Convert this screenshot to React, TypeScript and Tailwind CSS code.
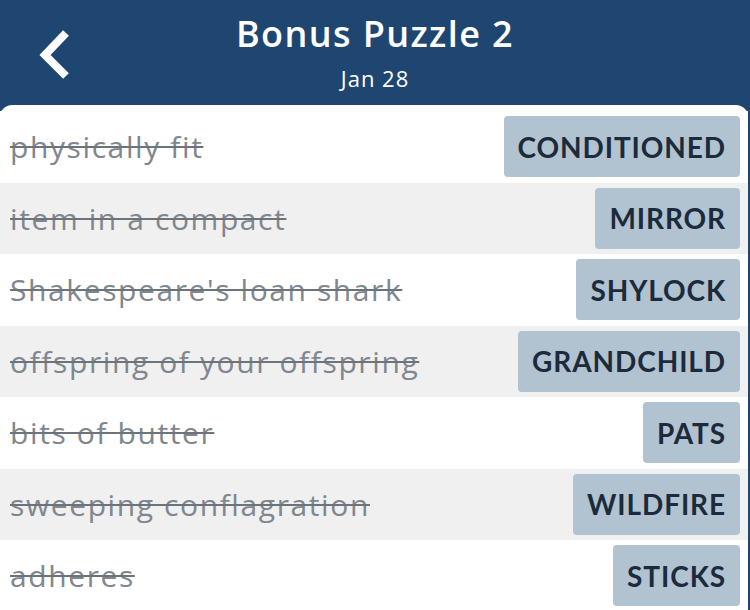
const clues = [
  { clue: "physically fit", answer: "CONDITIONED" },
  { clue: "item in a compact", answer: "MIRROR" },
  { clue: "Shakespeare's loan shark", answer: "SHYLOCK" },
  { clue: "offspring of your offspring", answer: "GRANDCHILD" },
  { clue: "bits of butter", answer: "PATS" },
  { clue: "sweeping conflagration", answer: "WILDFIRE" },
  { clue: "adheres", answer: "STICKS" },
];

export default function App() {
  return (
    <div className="w-[750px] h-[610px] overflow-hidden bg-[#1f4670] font-['Open_Sans',sans-serif]">
      {/* Header */}
      <div className="relative h-[105px] flex flex-col items-center pt-[10px] text-white">
        <button className="absolute left-[34px] top-[26px] w-[40px] h-[56px] flex items-center justify-center">
          <svg width="36" height="52" viewBox="0 0 36 52" fill="none">
            <path d="M30 5 L9 27 L30 48" stroke="white" strokeWidth="8" strokeLinecap="butt" strokeLinejoin="miter" />
          </svg>
        </button>
        <h1 className="text-[36px] leading-[48px] font-semibold tracking-[1.4px]">Bonus Puzzle 2</h1>
        <p className="text-[22px] leading-[30px] mt-[5px] tracking-[1px]">Jan 28</p>
      </div>

      {/* Clue list */}
      <div className="mr-[2px] bg-white rounded-t-[12px] pt-[6px] h-[505px]">
        {clues.map((c, i) => (
          <div
            key={c.clue}
            className={`h-[71.5px] flex items-center justify-between pl-[10px] pr-[8px] ${
              i % 2 === 1 ? "bg-[#f0f0f0]" : "bg-white"
            }`}
          >
            <span className="text-[30px] tracking-[1.6px] text-[#80878e] line-through decoration-[2px] decoration-[#6c737a]">
              {c.clue}
            </span>
            <span className="h-[61px] flex items-center px-[14px] rounded-[4px] bg-[#b1c2d0] text-[#1c2b3b] text-[28px] font-bold tracking-[0.9px] font-['Lato',sans-serif]">
              {c.answer}
            </span>
          </div>
        ))}
      </div>
    </div>
  );
}
